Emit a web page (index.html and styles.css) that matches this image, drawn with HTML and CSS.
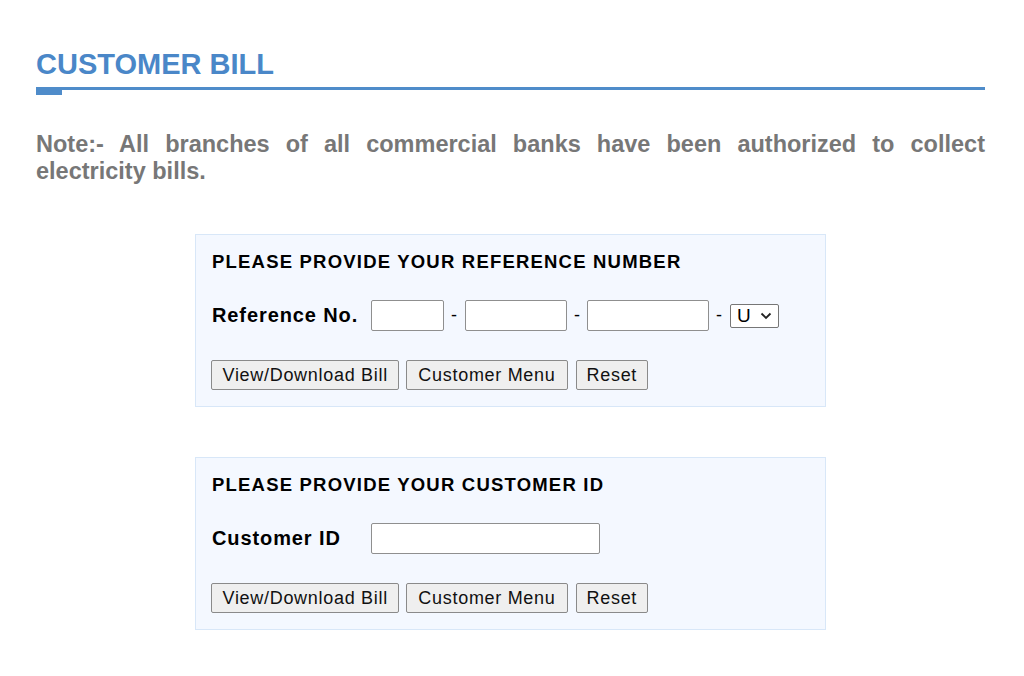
FILE: index.html
```html
<!DOCTYPE html>
<html lang="en">
<head>
    <meta charset="UTF-8">
    <title>Customer Bill</title>
    <link rel="stylesheet" href="styles.css">
</head>
<body>

<div class="page">
    <h1 class="page-title">CUSTOMER BILL</h1>
    <div class="rule">
        <div class="rule-line"></div>
        <div class="rule-tab"></div>
    </div>

    <p class="note">Note:- All branches of all commercial banks have been authorized to collect electricity bills.</p>

    <!-- Reference number form -->
    <form class="bill-box">
        <div class="box-title">PLEASE PROVIDE YOUR REFERENCE NUMBER</div>
        <div class="field-row">
            <label class="field-label" for="ref1">Reference No.</label>
            <input type="text" id="ref1" class="ref-1">
            <span class="dash">-</span>
            <input type="text" class="ref-2">
            <span class="dash">-</span>
            <input type="text" class="ref-3">
            <span class="dash">-</span>
            <span class="select-wrap">
                <select class="ref-type">
                    <option value="U" selected>U</option>
                    <option value="C">C</option>
                </select>
                <svg class="select-arrow" width="12" height="8" viewBox="0 0 12 8">
                    <path d="M1.5 1.5 L6 6 L10.5 1.5" fill="none" stroke="#222" stroke-width="1.8"/>
                </svg>
            </span>
        </div>
        <div class="button-row">
            <button type="button" class="btn-view">View/Download Bill</button>
            <button type="button" class="btn-menu">Customer Menu</button>
            <button type="reset" class="btn-reset">Reset</button>
        </div>
    </form>

    <!-- Customer ID form -->
    <form class="bill-box">
        <div class="box-title">PLEASE PROVIDE YOUR CUSTOMER ID</div>
        <div class="field-row">
            <label class="field-label" for="custId">Customer ID</label>
            <input type="text" id="custId" class="cust-id">
        </div>
        <div class="button-row">
            <button type="button" class="btn-view">View/Download Bill</button>
            <button type="button" class="btn-menu">Customer Menu</button>
            <button type="reset" class="btn-reset">Reset</button>
        </div>
    </form>
</div>

</body>
</html>
```

FILE: styles.css
```css
body {
    font-family: "Liberation Sans", Arial, sans-serif;
    background-color: #fff;
    margin: 0;
    padding: 0;
}
.page {
    padding: 0 39px 40px 36px;
}
.page-title {
    margin: 48px 0 0;
    font-size: 29px;
    line-height: 33px;
    font-weight: bold;
    color: #4a87c8;
}
.rule {
    margin-top: 6px;
}
.rule-line {
    height: 3px;
    background-color: #4f8cca;
}
.rule-tab {
    width: 26px;
    height: 5px;
    background-color: #4f8cca;
}
.note {
    margin: 36px 0 0;
    font-size: 23.5px;
    line-height: 27px;
    font-weight: bold;
    color: #777;
    text-align: justify;
}
.bill-box {
    width: 631px;
    box-sizing: border-box;
    margin: 50px auto 0;
    padding: 16px 15px 16px;
    background-color: #f4f8ff;
    border: 1px solid #d8e7f8;
}
.note + .bill-box {
    margin-top: 49px;
}
.box-title {
    font-size: 18.5px;
    line-height: 21px;
    font-weight: bold;
    letter-spacing: 1.2px;
    color: #000;
    padding-left: 1px;
}
.field-row {
    display: flex;
    align-items: center;
    margin-top: 28px;
}
.field-label {
    width: 160px;
    flex-shrink: 0;
    padding-left: 1px;
    box-sizing: border-box;
    font-size: 20px;
    font-weight: bold;
    letter-spacing: 0.9px;
}
.dash {
    font-size: 18px;
    margin: 0 7px;
}
input[type="text"] {
    height: 31px;
    box-sizing: border-box;
    border: 1px solid #8f8f8f;
    border-radius: 2px;
    background: #fff;
    padding: 0 4px;
    font-size: 17px;
}
.ref-1 { width: 73px; }
.ref-2 { width: 102px; margin-left: 1px; }
.ref-3 { width: 122px; }
.cust-id { width: 229px; }
.select-wrap {
    position: relative;
    display: inline-block;
    margin-left: 1px;
    height: 24px;
}
.ref-type {
    appearance: none;
    -webkit-appearance: none;
    width: 49px;
    height: 24px;
    padding: 0 0 0 6px;
    font-family: "Liberation Sans", Arial, sans-serif;
    font-size: 19px;
    border: 1px solid #767676;
    border-radius: 2px;
    background: #fff;
    color: #000;
}
.select-arrow {
    position: absolute;
    right: 7px;
    top: 8px;
    pointer-events: none;
}
.button-row {
    display: flex;
    gap: 7px;
    margin-top: 29px;
}
button {
    height: 30px;
    box-sizing: border-box;
    padding: 0 10px;
    font-family: "Liberation Sans", Arial, sans-serif;
    font-size: 18px;
    letter-spacing: 0.7px;
    color: #111;
    background-color: #efefef;
    border: 1px solid #8a8a8a;
    border-radius: 2px;
}
.btn-view {
    padding: 0 10.5px;
}
.btn-menu {
    padding: 0 11px;
}
.btn-reset {
    margin-left: 1px;
}
```
